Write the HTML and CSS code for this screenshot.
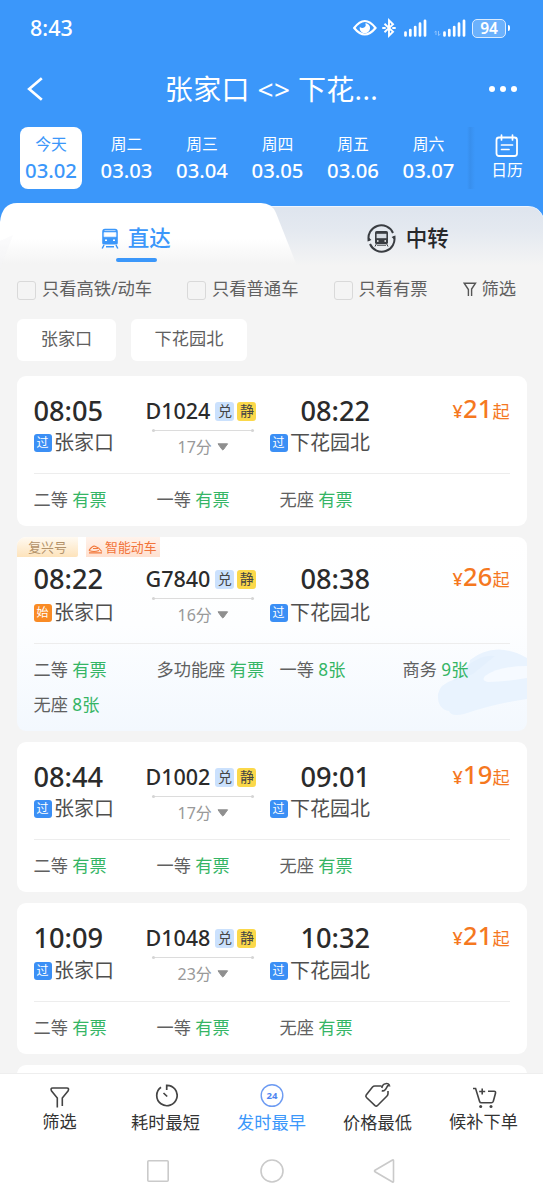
FILE: index.html
```html
<!DOCTYPE html>
<html lang="zh-CN">
<head>
<meta charset="utf-8">
<title>车票列表</title>
<link rel="stylesheet" href="styles.css">
</head>
<body>
<svg class="defs" width="0" height="0" aria-hidden="true">
  <symbol id="signal" viewBox="0 0 23 18"><path d="M1.500 13.500v3M6.300 11v5.500M11.200 8v8.500M16 4.700v11.800M21 1.800v14.700" stroke="#fff" stroke-width="2.700" stroke-linecap="round" fill="none"/></symbol>
  <symbol id="tri" viewBox="0 0 12 8"><path d="M1 .8h9.600L6.500 6.500q-.7.800-1.400 0z" fill="#8f8f8f" stroke="#8f8f8f" stroke-linejoin="round"/></symbol>
</svg>
<div class="app">
  <header class="header">
    <div class="status">
      <span class="clock">8:43</span>
      <div class="status-icons">
        <svg class="eye" width="24" height="18" viewBox="0 0 24 18"><path d="M1.200 9Q11.800-5 22.500 9 11.800 22 1.200 9z" fill="none" stroke="#fff" stroke-width="2.200"/><path d="M12.500 3.900a5.200 5.200 0 1 1-5.700 4q2.500 2 4.700.4 1.800-1.600 1-4.400z" fill="#fff"/></svg>
        <svg class="bt" width="14" height="20" viewBox="0 0 14 20"><path d="M2.500 5.800l8.500 8L7 17.700V2.300l4 4-8.500 7.900" fill="none" stroke="#fff" stroke-width="1.900"/><path d="M1 10h2M11 10h2" stroke="#fff" stroke-width="1.900" stroke-linecap="round"/></svg>
        <svg class="sig1" width="23" height="18"><use href="#signal"/></svg>
        <svg class="updown" width="8" height="7" viewBox="0 0 8 7"><path d="M.5 2.200L2 1v4M4.500 1v4.500L6.500 4" fill="none" stroke="#90c4ff"/></svg>
        <svg class="sig2" width="23" height="18"><use href="#signal"/></svg>
        <span class="battery">94</span><i class="battery-tip"></i>
      </div>
    </div>
    <div class="titlebar">
      <svg class="back" width="18" height="24" viewBox="0 0 18 24"><path d="M15.800 1.200L3.200 12l12.600 10.800" fill="none" stroke="#fff" stroke-width="2.700"/></svg>
      <h1 class="title">张家口 &lt;&gt; 下花...</h1>
      <div class="more"><i></i><i></i><i></i></div>
    </div>
    <div class="dates">
      <div class="date on"><span>今天</span><b>03.02</b></div>
      <div class="date"><span>周二</span><b>03.03</b></div>
      <div class="date"><span>周三</span><b>03.04</b></div>
      <div class="date"><span>周四</span><b>03.05</b></div>
      <div class="date"><span>周五</span><b>03.06</b></div>
      <div class="date"><span>周六</span><b>03.07</b></div>
      <div class="calendar">
        <svg width="24" height="24" viewBox="0 0 24 24"><rect x="1.500" y="3.500" width="20.500" height="18.500" rx="2.500" fill="none" stroke="#fff" stroke-width="1.800"/><path d="M6.500 1v5M17.500 1v5M6.500 11h11M6.500 15.500h7.500" stroke="#fff" stroke-width="1.700" stroke-linecap="round"/></svg>
        <span>日历</span>
      </div>
    </div>
  </header>

  <div class="tabs">
    <svg class="tabs-bg" width="543" height="68" viewBox="0 0 543 68">
      <defs>
        <linearGradient id="gw" gradientUnits="userSpaceOnUse" x1="0" y1="0" x2="0" y2="68"><stop offset=".52" stop-color="#fff"/><stop offset=".9" stop-color="#f4f4f4"/></linearGradient>
        <linearGradient id="gg" gradientUnits="userSpaceOnUse" x1="0" y1="0" x2="0" y2="68"><stop offset=".1" stop-color="#dfe5ee"/><stop offset=".4" stop-color="#e4e9f0"/><stop offset=".92" stop-color="#f4f4f4"/></linearGradient>
      </defs>
      <path d="M0 30h543v38H0z" fill="#f4f4f4"/>
      <path d="M200 3.500h328q11 0 15 10.500v54H200z" fill="url(#gg)"/>
      <path d="M200 3.500h328q11 0 15 10.500" fill="none" stroke="#eef5ff" stroke-width="1"/>
      <path d="M0 19Q2 0 17 0h244q11 0 15 10L299 68H0z" fill="url(#gw)"/>
      <path d="M13 32L0 66V38z" fill="#f5f6f7" opacity=".4"/>
    </svg>
    <div class="tab direct">
      <svg width="18" height="21" viewBox="0 0 18 21"><path d="M4 .7h10q2.800 0 2.800 3V15q0 1.500-1.500 1.500H2.700Q1.200 16.500 1.200 15V3.700q0-3 2.800-3z" fill="#3b97fa"/><path d="M3.500 2.600h11M3 4.500h12v4.200H3z" fill="#fff" stroke="#d5e8ff" stroke-width=".8"/><path d="M4 12.300h2M12 12.300h2" stroke="#fff" stroke-width="1.600"/><path d="M3 17L1.200 20.500M15 17l1.800 3.500M5 18.800h8" stroke="#3b97fa" stroke-width="1.500"/></svg>
      <span>直达</span>
    </div>
    <div class="tab transfer">
      <svg width="29" height="29" viewBox="0 0 29 29"><path d="M1.800 17A12.800 12.800 0 0 1 26 9M27.200 12A12.800 12.800 0 0 1 3 20" fill="none" stroke="#3a3d42" stroke-width="2"/><path d="M.6 17.500l.8-4.500 3 3zM28.400 11.500l-.8 4.500-3-3z" fill="#3a3d42"/><rect x="8" y="7" width="13" height="13" rx="1.600" fill="#3a3d42"/><path d="M9.600 9.800h9.800v4.400H9.600z" fill="#d7dce3"/><path d="M10 17h1.500M17.500 17H19" stroke="#fff" stroke-width="1.400"/><path d="M9.300 20L8 22.500M19.700 20l1.300 2.500M10 21.200h9" stroke="#3a3d42" stroke-width="1"/></svg>
      <span>中转</span>
    </div>
  </div>

  <div class="checks">
    <label class="check c1"><i></i>只看高铁/动车</label>
    <label class="check c2"><i></i>只看普通车</label>
    <label class="check c3"><i></i>只看有票</label>
    <div class="filter"><svg width="14" height="15" viewBox="0 0 14 15"><path d="M5.400 14V7.500L1.200 1.200h11.300L8.600 7v7" fill="none" stroke="#555" stroke-width="1.400"/></svg>筛选</div>
  </div>
  <div class="chips"><span class="chip">张家口</span><span class="chip wide">下花园北</span></div>

  <main class="list">
    <article class="card">
      <div class="info">
        <div class="dep"><div class="time">08:05</div><div class="station"><i class="badge">过</i>张家口</div></div>
        <div class="mid"><div class="train">D1024<i class="tag">兑</i><i class="tag quiet">静</i></div><div class="line"></div><div class="dur">17分<svg width="12" height="8"><use href="#tri"/></svg></div></div>
        <div class="arr"><div class="time">08:22</div><div class="station"><i class="badge">过</i>下花园北</div></div>
        <div class="price">¥<b>21</b><span>起</span></div>
      </div>
      <div class="seats"><span>二等 <em>有票</em></span><span>一等 <em>有票</em></span><span>无座 <em>有票</em></span></div>
    </article>

    <article class="card smart">
      <svg class="bullet" width="90" height="70" viewBox="0 0 90 70"><path d="M1 48Q3 38 16 34 34 19 33 14 58-6 90 12V53Q60 57 27 68 14 71 12 65 0 63 1 48z" fill="#e9f3fe"/><path d="M48 30Q62 20 90 20v12Q68 36 51 36 44 35 48 30z" fill="#f6faff"/><path d="M34 17Q47 8 58 10L36 28 16 35z" fill="#e4f0fd"/></svg>
      <div class="labels"><span class="label fuxing">复兴号</span><span class="label intel"><svg width="15" height="9" viewBox="0 0 15 9"><path d="M1 5.500Q4.500.5 7 1.300 11 2.500 13.800 6.500M1 5.500q5 2 10 0M5 3.500h5M1 7.800h13" fill="none" stroke="#f2793d" stroke-width="1.200"/></svg>智能动车</span></div>
      <div class="info">
        <div class="dep"><div class="time">08:22</div><div class="station"><i class="badge start">始</i>张家口</div></div>
        <div class="mid"><div class="train">G7840<i class="tag">兑</i><i class="tag quiet">静</i></div><div class="line"></div><div class="dur">16分<svg width="12" height="8"><use href="#tri"/></svg></div></div>
        <div class="arr"><div class="time">08:38</div><div class="station"><i class="badge">过</i>下花园北</div></div>
        <div class="price">¥<b>26</b><span>起</span></div>
      </div>
      <div class="seats"><span>二等 <em>有票</em></span><span>多功能座 <em>有票</em></span><span>一等 <em>8张</em></span><span>商务 <em>9张</em></span><span>无座 <em>8张</em></span></div>
    </article>

    <article class="card">
      <div class="info">
        <div class="dep"><div class="time">08:44</div><div class="station"><i class="badge">过</i>张家口</div></div>
        <div class="mid"><div class="train">D1002<i class="tag">兑</i><i class="tag quiet">静</i></div><div class="line"></div><div class="dur">17分<svg width="12" height="8"><use href="#tri"/></svg></div></div>
        <div class="arr"><div class="time">09:01</div><div class="station"><i class="badge">过</i>下花园北</div></div>
        <div class="price">¥<b>19</b><span>起</span></div>
      </div>
      <div class="seats"><span>二等 <em>有票</em></span><span>一等 <em>有票</em></span><span>无座 <em>有票</em></span></div>
    </article>

    <article class="card tall">
      <div class="info">
        <div class="dep"><div class="time">10:09</div><div class="station"><i class="badge">过</i>张家口</div></div>
        <div class="mid"><div class="train">D1048<i class="tag">兑</i><i class="tag quiet">静</i></div><div class="line"></div><div class="dur">23分<svg width="12" height="8"><use href="#tri"/></svg></div></div>
        <div class="arr"><div class="time">10:32</div><div class="station"><i class="badge">过</i>下花园北</div></div>
        <div class="price">¥<b>21</b><span>起</span></div>
      </div>
      <div class="seats"><span>二等 <em>有票</em></span><span>一等 <em>有票</em></span><span>无座 <em>有票</em></span></div>
    </article>
    <article class="card next"></article>
  </main>

  <footer class="footer">
    <nav class="sorts">
      <div class="sort edge"><svg width="24" height="26" viewBox="0 0 24 26"><path d="M9.300 24.500V15L3.600 8Q2 5 4.800 5h14q2.800 0 1.200 3l-5.700 7v8" fill="none" stroke="#444" stroke-width="1.600"/></svg><span>筛选</span></div>
      <div class="sort"><svg width="24" height="26" viewBox="0 0 24 26"><path d="M7 4.200A10.200 10.200 0 1 0 12.700 2.300V7M9.500 10l3.700 3.500" fill="none" stroke="#444" stroke-width="1.700"/></svg><span>耗时最短</span></div>
      <div class="sort on"><svg width="26" height="26" viewBox="0 0 26 26"><circle cx="13" cy="12.500" r="10.800" fill="none" stroke="#6d9bf2" stroke-width="1.400"/><text class="hours" x="13" y="16" text-anchor="middle">24</text></svg><span>发时最早</span></div>
      <div class="sort"><svg width="28" height="28" viewBox="0 0 28 28"><path d="M17.500 4H10.800Q9.500 4 8.500 5L2.200 13Q1.300 14.200 2.500 15.500l8.500 8.200q1.200 1 2.300 0L23 14q1-1 1-2.500V9M17.800 8.500q2 1.300 3.800-1.200L23.500 4Q25.500 2.500 25.700 4.500M17.800 6Q18.500 2 21.500 1.700q3.500-.7 4 2" fill="none" stroke="#444" stroke-width="1.600"/></svg><span>价格最低</span></div>
      <div class="sort edge"><svg width="26" height="26" viewBox="0 0 26 26"><path d="M2 5.500h2.600l4 13q.4 1.300 1.700 1.300h10q1.500 0 2-1.500l2.200-8q.4-2-1.400-2H17M8.200 8.500h6M11.200 5.500v6" fill="none" stroke="#444" stroke-width="1.600"/><circle cx="9.700" cy="23.500" r="1.500" fill="#444"/><circle cx="20" cy="23.500" r="1.500" fill="#444"/></svg><span>候补下单</span></div>
    </nav>
    <div class="sysnav">
      <svg width="24" height="24" viewBox="0 0 24 24"><rect x="1.800" y="1.800" width="20.400" height="20.400" rx="1" fill="none" stroke="#cacaca" stroke-width="1.600"/></svg>
      <svg width="24" height="24" viewBox="0 0 24 24"><circle cx="12" cy="12" r="11" fill="none" stroke="#cacaca" stroke-width="1.600"/></svg>
      <svg width="24" height="24" viewBox="0 0 24 24"><path d="M20.500 1.500v21q0 1-1 .5L2 12.800q-1-.8 0-1.600L19.500 1q1-.5 1 .5z" fill="none" stroke="#cacaca" stroke-width="1.600"/></svg>
    </div>
  </footer>
</div>
</body>
</html>
```
FILE: styles.css
```css
* { box-sizing: border-box; }
body { margin: 0; font-family: "Noto Sans", "Noto Sans CJK SC", sans-serif; }
i, em { font-style: normal; }
svg { display: block; flex: none; }
.defs { position: absolute; }

.app { width: 543px; height: 1200px; display: flex; flex-direction: column; overflow: hidden; background: #f4f4f4; white-space: nowrap; }

.header { height: 203px; flex: none; background: #3b97fa; color: #fff; }
.status { height: 56px; padding: 0 33px 0 30px; display: flex; align-items: center; justify-content: space-between; }
.clock { font-size: 21.500px; font-weight: 500; line-height: 28px; padding-bottom: 1px; }
.status-icons { display: flex; align-items: center; }
.bt { margin-left: 5px; }
.sig1 { margin-left: 8px; }
.updown { margin: 10px 0 0 7px; }
.sig2 { margin-left: 1px; }
.battery { width: 34px; height: 19px; margin-left: 6px; border: 1.500px solid #d9ebff; border-radius: 5px; background: #6bb1fc; font-size: 15.500px; font-weight: 600; line-height: 16px; text-align: center; }
.battery-tip { width: 2px; height: 6px; margin-left: 2px; border-radius: 0 2px 2px 0; background: #fff; }

.titlebar { height: 66px; padding: 0 26px; display: grid; grid-template-columns: 60px 1fr 60px; align-items: center; }
.title { margin: 0; font-size: 28px; font-weight: 400; line-height: 40px; letter-spacing: .35px; text-align: center; }
.more { display: flex; justify-content: flex-end; gap: 5px; }
.more i { width: 6px; height: 6px; border-radius: 50%; background: #fff; }

.dates { display: flex; padding: 5px 8px 0 20px; }
.date { width: 62px; height: 62px; margin-right: 13.500px; padding-top: 5px; border-radius: 8px; display: flex; flex-direction: column; align-items: center; }
.date span { font-size: 15.800px; line-height: 25px; }
.date b { font-size: 20.300px; line-height: 26px; font-weight: 500; }
.date.on { background: #fff; color: #3b97fa; }
.calendar { flex: 1; margin-left: -6px; padding: 7px 0 0 12px; display: flex; flex-direction: column; align-items: center; font-size: 15.800px; line-height: 24px; background: linear-gradient(90deg, #3b97fa, #388fed 3px, #3b97fa 8px); }

.tabs { height: 68px; flex: none; display: flex; position: relative; background: linear-gradient(#3b97fa 30px, #f4f4f4 30px); }
.tabs-bg { position: absolute; left: 0; top: 0; }
.tab { position: relative; width: 271.500px; display: flex; align-items: center; justify-content: center; font-size: 21.500px; font-weight: 500; }
.direct { height: 59px; padding-top: 12px; gap: 9px; color: #3b97fa; }
.direct span { line-height: 50px; padding-bottom: 2px; }
.direct::after { content: ""; position: absolute; left: 116px; bottom: 0; width: 41px; height: 4px; border-radius: 2px; background: #3b97fa; }
.transfer { height: 61px; gap: 10px; color: #26282b; padding: 9px 0 0 1px; }
.transfer span { padding-bottom: 4px; }

.checks { height: 38px; flex: none; padding: 0 27px 0 17px; display: flex; align-items: center; color: #606060; font-size: 17.300px; line-height: 24px; padding-bottom: 2px; }
.check { display: flex; align-items: center; gap: 6px; }
.check i { width: 19px; height: 19px; margin-top: 2px; border: 1.500px solid #d9d9d9; border-radius: 3px; }
.c1 { width: 170px; }
.c2 { width: 146.500px; }
.filter { margin-left: auto; display: flex; align-items: center; gap: 4px; }
.chips { flex: none; height: 67px; padding: 10px 17px 0; display: flex; gap: 15px; }
.chip { width: 99px; height: 42px; background: #fff; border-radius: 6px; text-align: center; font-size: 17.200px; line-height: 40px; color: #606060; }
.chip.wide { width: 116px; }

.list { flex: 1; min-height: 0; overflow: hidden; padding: 0 16px 0 17px; display: flex; flex-direction: column; gap: 11px; }
.card { flex: none; height: 150px; padding: 0 17px 0 16.500px; border-radius: 9px; background: #fff; overflow: hidden; position: relative; }
.info { height: 98px; padding-top: 17px; display: grid; grid-template-columns: 112px 124px 110px 1fr; border-bottom: 1px solid #ededed; position: relative; }
.time { font-size: 27.200px; font-weight: 500; line-height: 36px; color: #2b2b2b; }
.arr .time { padding-left: 31px; }
.station { height: 26px; margin-top: 1px; display: flex; align-items: center; gap: 2.500px; font-size: 20px; color: #4f4f4f; line-height: 26px; }
.badge { width: 18px; height: 18px; border-radius: 3px; background: #3b8ff5; color: #fff; font-size: 12px; line-height: 18px; text-align: center; }
.badge.start { background: #f98b25; }
.train { height: 37px; padding-bottom: 2px; display: flex; align-items: center; font-size: 21.500px; font-weight: 500; color: #2b2b2b; }
.tag { width: 19px; height: 19px; margin: 1px 0 0 3px; border-radius: 3px; background: #cbe1fd; color: #444; font-size: 14px; font-weight: 400; line-height: 18px; text-align: center; }
.train .tag:first-of-type { margin-left: 5px; }
.tag.quiet { background: #fbd84a; }
.line { width: 102px; height: 1px; margin: 0 0 0 6px; background: #dcdcdc; position: relative; }
.line::before, .line::after { content: ""; position: absolute; top: -1px; width: 3px; height: 3px; border-radius: 50%; background: #d5d5d5; }
.line::before { left: 0; }
.line::after { right: 0; }
.dur { display: flex; align-items: center; gap: 5px; padding-left: 32px; height: 29px; font-size: 16px; color: #999; }
.dur svg { margin-top: 2px; }
.price { display: flex; justify-content: flex-end; align-items: baseline; height: 36px; line-height: 31px; color: #f5781f; font-size: 18px; font-weight: 500; letter-spacing: .2px; }
.price b { font-size: 25.500px; font-weight: 500; }
.price span { font-size: 17.200px; font-weight: 400; }
.seats { padding-top: 8px; display: grid; grid-template-columns: repeat(4, 123px); grid-auto-rows: 35px; align-items: center; font-size: 17.200px; line-height: 26px; color: #606060; position: relative; }
.seats em { color: #35b565; }

.smart { height: 194px; background: linear-gradient(#fff, #fdfeff 45%, #f3f8fe); }
.smart .info { height: 107px; padding-top: 24px; }
.smart .station { margin-top: 3px; }
.bullet { position: absolute; right: 0; top: 109px; }
.labels { position: absolute; left: 0; top: 0; display: flex; gap: 8px; }
.label { height: 20px; font-size: 12.900px; line-height: 20px; }
.fuxing { width: 61px; text-align: center; background: linear-gradient(#fffaf2, #fde3bb); color: #b3926a; border-radius: 0 0 2px 0; }
.intel { width: 74px; display: flex; align-items: center; gap: 2px; padding-left: 2px; background: linear-gradient(#fff3ec, #ffe0cf); color: #f2743a; }
.intel svg { margin-top: 4px; }
.tall { height: 151px; }
.tall .info { height: 99px; }
.tall .station { margin-top: 2px; }

.footer { flex: none; height: 127px; background: #fff; border-top: 1px solid #eee; }
.sorts { height: 68px; padding: 8px 6.500px 0; display: grid; grid-template-columns: repeat(5, 106px); }
.sort { display: flex; flex-direction: column; align-items: center; color: #333; font-size: 17.200px; }
.sort svg { height: 28px; }
.sort span { line-height: 26px; }
.sort.on { color: #3b97fa; }
.edge span { margin-top: -1px; }
.hours { font-size: 9.500px; font-weight: 700; fill: #4e85f0; }
.sysnav { height: 58px; padding: 0 146px; display: flex; justify-content: space-between; align-items: center; }
```
